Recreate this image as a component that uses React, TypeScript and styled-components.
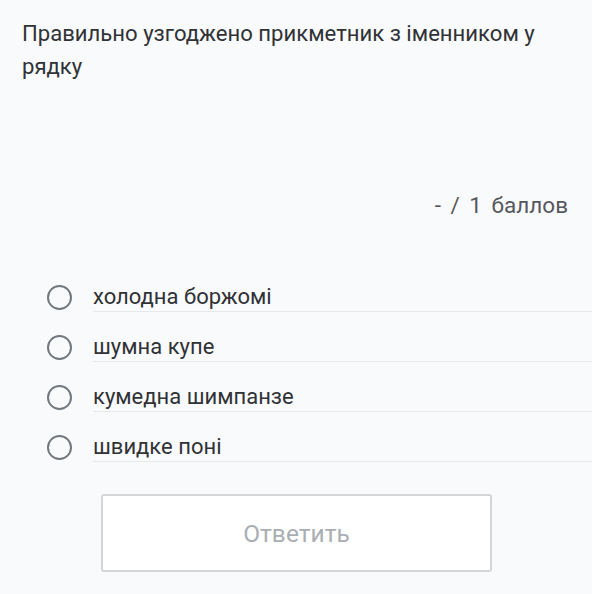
import React from "react";
import styled, { createGlobalStyle } from "styled-components";

const Global = createGlobalStyle`
  html, body { margin: 0; padding: 0; background: #f9fafc; }
  body { font-family: Roboto, "Noto Sans", sans-serif; }
`;

const Page = styled.div`
  width: 592px;
  height: 594px;
  box-sizing: border-box;
  padding: 17px 0 0 22px;
  display: flex;
  flex-direction: column;
`;

const Question = styled.div`
  font-size: 22.1px;
  line-height: 33px;
  color: #303235;
  padding-right: 30px;
`;

const Points = styled.div`
  margin-top: 107px;
  align-self: flex-end;
  padding-right: 24px;
  font-size: 22.5px;
  line-height: 30px;
  color: #55585c;
  word-spacing: 4px;
`;

const Options = styled.div`
  margin-top: 63px;
  display: flex;
  flex-direction: column;
  gap: 21px;
`;

const Option = styled.label`
  display: flex;
  align-items: center;
  margin-left: 25px;
`;

const Radio = styled.span`
  width: 21px;
  height: 21px;
  border: 2.5px solid #73787d;
  border-radius: 50%;
  flex: none;
  margin-right: 21px;
  margin-top: -1px;
`;

const OptionText = styled.span`
  flex: 1;
  height: 29px;
  line-height: 28px;
  font-size: 22px;
  color: #303235;
  border-bottom: 1px solid #e6e8eb;
  box-sizing: border-box;
`;

const ButtonRow = styled.div`
  margin-top: 32px;
  padding-left: 79px;
`;

const Button = styled.button`
  width: 391px;
  height: 78px;
  background: #fff;
  border: 2px solid #d3d6d9;
  border-radius: 3px;
  font-family: Roboto, "Noto Sans", sans-serif;
  font-size: 24.5px;
  color: #a9aeb3;
  padding: 0;
`;

const options = ["холодна боржомі", "шумна купе", "кумедна шимпанзе", "швидке поні"];

export default function App() {
  return (
    <>
      <Global />
      <Page>
        <Question>Правильно узгоджено прикметник з іменником у рядку</Question>
        <Points>- / 1 баллов</Points>
        <Options>
          {options.map((o) => (
            <Option key={o}>
              <Radio />
              <OptionText>{o}</OptionText>
            </Option>
          ))}
        </Options>
        <ButtonRow>
          <Button>Ответить</Button>
        </ButtonRow>
      </Page>
    </>
  );
}
